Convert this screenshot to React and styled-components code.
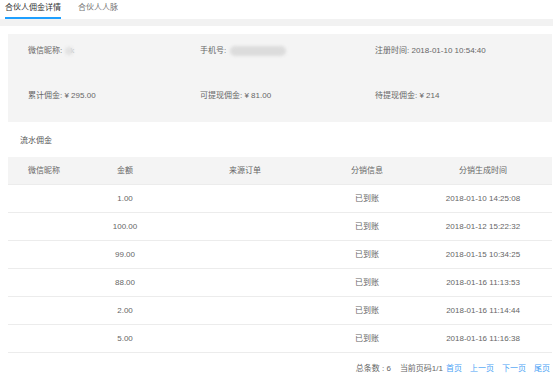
import React from "react";
import styled, { createGlobalStyle } from "styled-components";

const Global = createGlobalStyle`
  html, body { margin: 0; padding: 0; background: #fff; }
  body { font-family: "Liberation Sans", "Noto Sans CJK SC", sans-serif; font-size: 8px; color: #666; }
`;

const Page = styled.div`
  width: 553px;
  overflow: hidden;
`;

const Tabs = styled.div`
  display: flex;
  height: 19px;
  padding-left: 5px;
  gap: 17px;
`;

const Tab = styled.div`
  height: 17px;
  line-height: 16px;
  padding: 0;
  color: ${(p) => (p.$active ? "#333" : "#777")};
  border-bottom: 2px solid ${(p) => (p.$active ? "#1e9fff" : "transparent")};
  white-space: nowrap;
`;

const Strip = styled.div`
  height: 7px;
  background: #f2f2f2;
`;

const Content = styled.div`
  padding: 8px 1px 0 8px;
`;

const InfoCard = styled.div`
  background: #f4f4f4;
  padding: 12px 0 21px 20px;
  display: grid;
  grid-template-columns: 172px 175px 1fr;
  grid-auto-rows: 10px;
  row-gap: 35px;
  line-height: 10px;
  color: #666;
`;

const Field = styled.div`
  white-space: nowrap;
  display: flex;
  align-items: center;
`;

const Blur = styled.span`
  display: inline-block;
  width: ${(p) => p.$w}px;
  height: ${(p) => p.$h}px;
  border-radius: ${(p) => p.$h / 2}px;
  background: ${(p) => p.$c};
  filter: blur(1.5px);
  margin-left: ${(p) => p.$ml || 0}px;
`;

const Faint = styled.span`
  color: #bbb;
  margin-left: -3px;
`;

const SectionTitle = styled.div`
  height: 33px;
  padding-top: 2px;
  line-height: 33px;
  padding-left: 12px;
  color: #555;
`;

const Table = styled.div`
  width: 544px;
`;

const Row = styled.div`
  display: grid;
  grid-template-columns: 72px 90px 150px 94px 138px;
  height: 27px;
  border-bottom: 1px solid #ececec;
  background: ${(p) => (p.$head ? "#f4f4f4" : "#fff")};
  align-items: center;
  text-align: center;
  color: #666;
`;

const Cell = styled.div`
  white-space: nowrap;
  line-height: 10px;
`;

const Footer = styled.div`
  display: flex;
  justify-content: flex-end;
  align-items: center;
  height: 28px;
  padding-right: 2px;
  gap: 8px;
  color: #666;
`;

const Link = styled.span`
  color: #4a9ff5;
`;

const Info = styled.span`
  margin-right: ${(p) => p.$mr || 0}px;
`;

const rows = [
  ["1.00", "2018-01-10 14:25:08"],
  ["100.00", "2018-01-12 15:22:32"],
  ["99.00", "2018-01-15 10:34:25"],
  ["88.00", "2018-01-16 11:13:53"],
  ["2.00", "2018-01-16 11:14:44"],
  ["5.00", "2018-01-16 11:16:38"],
];

export default function App() {
  return (
    <Page>
      <Global />
      <Tabs>
        <Tab $active>合伙人佣金详情</Tab>
        <Tab>合伙人人脉</Tab>
      </Tabs>
      <Strip />
      <Content>
        <InfoCard>
          <Field>
            微信昵称:
            <Blur $w={8} $h={8} $c="#e2e2e2" $ml={3} />
            <Faint>k</Faint>
          </Field>
          <Field>
            手机号:
            <Blur $w={56} $h={10} $c="#dcdcdc" $ml={4} />
          </Field>
          <Field>注册时间: 2018-01-10 10:54:40</Field>
          <Field>累计佣金: ¥ 295.00</Field>
          <Field>可提现佣金: ¥ 81.00</Field>
          <Field>待提现佣金: ¥ 214</Field>
        </InfoCard>
        <SectionTitle>流水佣金</SectionTitle>
        <Table>
          <Row $head>
            <Cell>微信昵称</Cell>
            <Cell>金额</Cell>
            <Cell>来源订单</Cell>
            <Cell>分销信息</Cell>
            <Cell>分销生成时间</Cell>
          </Row>
          {rows.map(([amt, time]) => (
            <Row key={time}>
              <Cell></Cell>
              <Cell>{amt}</Cell>
              <Cell></Cell>
              <Cell>已到账</Cell>
              <Cell>{time}</Cell>
            </Row>
          ))}
        </Table>
        <Footer>
          <Info $mr={1}>总条数 : 6</Info>
          <Info $mr={-5}>当前页码1/1</Info>
          <Link>首页</Link>
          <Link>上一页</Link>
          <Link>下一页</Link>
          <Link>尾页</Link>
        </Footer>
      </Content>
    </Page>
  );
}
